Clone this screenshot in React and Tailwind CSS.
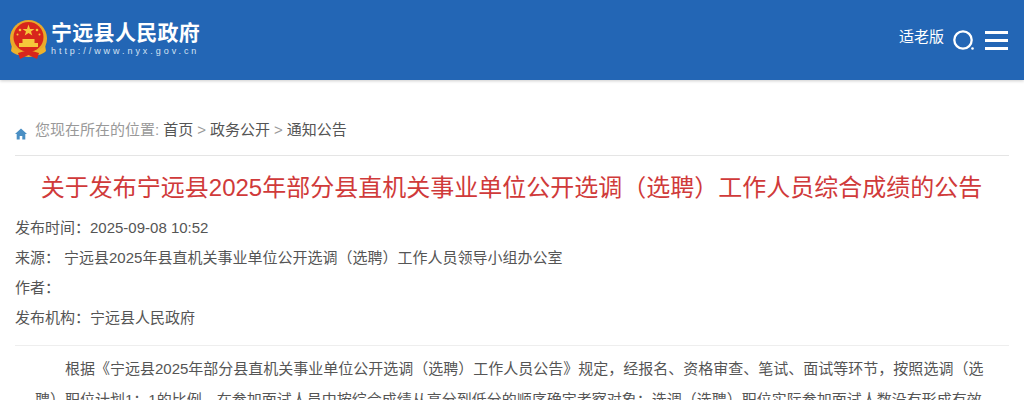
const font = { cjk: "font-['Liberation_Sans','Noto_Sans_CJK_SC',sans-serif]" };

function Emblem() {
  return (
    <svg width="38" height="40" viewBox="0 0 38 40" className="shrink-0">
      <circle cx="18.500" cy="18.500" r="18.500" fill="#e9a92a" />
      <circle cx="18.500" cy="17" r="15" fill="#d8261c" />
      <polygon points="18.500,4.500 20,9 24.500,9 21,11.500 22.300,15.500 18.500,13 14.700,15.500 16,11.500 12.500,9 17,9" fill="#f6c73a" />
      <circle cx="10" cy="10" r="1.300" fill="#f6c73a" />
      <circle cx="27" cy="10" r="1.300" fill="#f6c73a" />
      <circle cx="7.500" cy="14.500" r="1" fill="#f6c73a" />
      <circle cx="29.500" cy="14.500" r="1" fill="#f6c73a" />
      <rect x="9" y="23" width="19" height="4" fill="#f6c73a" />
      <rect x="12.500" y="19" width="12" height="4" fill="#f6c73a" />
      <path d="M2 25 C8 34 29 34 35 25 L36 31 C30 38 7 38 1 31 Z" fill="#eeb22c" />
      <path d="M8 33 L18.500 30 L29 33 L27 39 L18.500 35 L10 39 Z" fill="#d8261c" />
    </svg>
  );
}

export default function App() {
  return (
    <div className={`w-full h-[400px] overflow-hidden bg-white ${font.cjk}`}>
      <header className="h-20 bg-[#2366b5] flex items-center justify-between pl-[10px] pr-4 shadow-[0_1px_3px_rgba(0,0,0,0.2)]">
        <div className="flex items-center gap-[3px]">
          <Emblem />
          <div className="text-white -mt-[2px]">
            <div className="text-[21px] leading-6 font-bold tracking-[0.3px]">宁远县人民政府</div>
            <div className="text-[9px] leading-3 tracking-[2.95px] text-[#d4e2f3]">http://www.nyx.gov.cn</div>
          </div>
        </div>
        <div className="flex items-center text-white">
          <span className="text-[15px] mr-[9px] -mt-[6px]">适老版</span>
          <svg width="22" height="22" viewBox="0 0 22 22" className="mr-[10px] mt-[1px]" fill="none">
            <circle cx="10" cy="10" r="8.700" stroke="white" strokeWidth="2.300" />
            <circle cx="19.500" cy="18.500" r="1.300" fill="white" />
          </svg>
          <div className="w-[23px] flex flex-col gap-[5px]">
            <div className="h-[3px] bg-white" />
            <div className="h-[3px] bg-white" />
            <div className="h-[3px] bg-white" />
          </div>
        </div>
      </header>

      <main className="px-[15px]">
        <div className="flex items-center h-[76px] pt-[25px] border-b border-[#e5e5e5] text-[15px] text-[#999]">
          <svg width="12" height="12" viewBox="0 0 12 12" className="mr-2 mt-2 shrink-0">
            <path d="M6 .5 L12 6 H10.300 V11.500 H7.300 V8 H4.700 V11.500 H1.700 V6 H0 Z" fill="#4a8fc4" />
          </svg>
          <span>您现在所在的位置:</span>
          <span className="text-[#555] ml-1">首页</span>
          <span className="mx-1">&gt;</span>
          <span className="text-[#555]">政务公开</span>
          <span className="mx-1">&gt;</span>
          <span className="text-[#555]">通知公告</span>
        </div>

        <h1 className="text-center text-[24px] leading-[64px] h-[58px] text-[#d03a3a] -ml-px">
          关于发布宁远县2025年部分县直机关事业单位公开选调（选聘）工作人员综合成绩的公告
        </h1>

        <div className="text-[15px] leading-[30px] text-[#555] border-b border-[#eee] pb-[12px] mt-[-1px]">
          <div>发布时间：2025-09-08 10:52</div>
          <div>来源：<span className="ml-[4px]">宁远县2025年县直机关事业单位公开选调（选聘）工作人员领导小组办公室</span></div>
          <div>作者：</div>
          <div>发布机构：宁远县人民政府</div>
        </div>

        <p className="mt-[7px] px-5 text-[15px] leading-[31px] text-[#555] indent-[30px]">
          根据《宁远县2025年部分县直机关事业单位公开选调（选聘）工作人员公告》规定，经报名、资格审查、笔试、面试等环节，按照选调（选聘）职位计划1：1的比例，在参加面试人员中按综合成绩从高分到低分的顺序确定考察对象；选调（选聘）职位实际参加面试人数没有形成有效竞争的，按规定执行。
        </p>
      </main>
    </div>
  );
}
